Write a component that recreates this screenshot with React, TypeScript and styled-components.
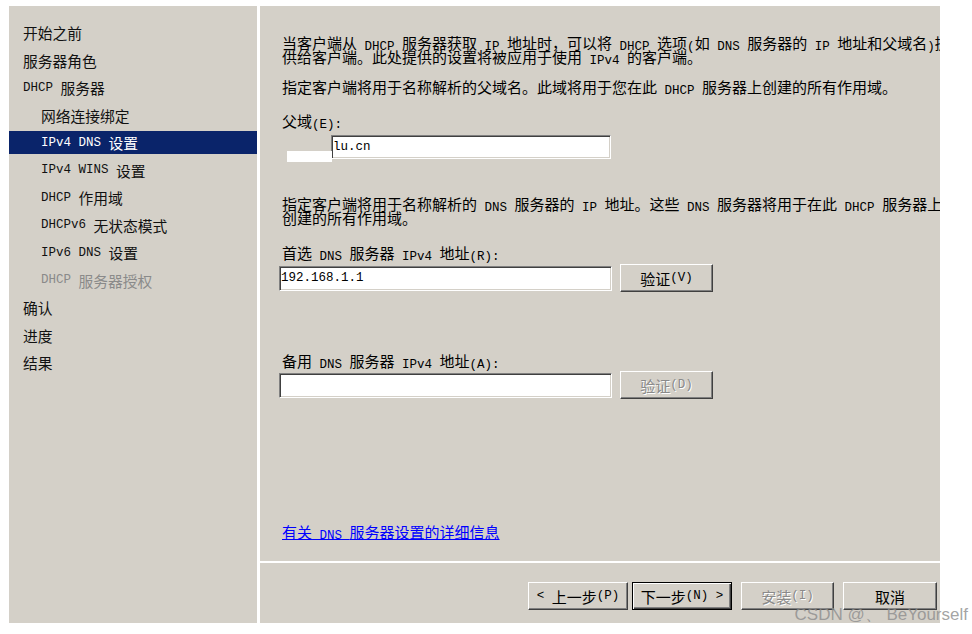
import React from "react"
import styled, { createGlobalStyle, css } from "styled-components"

const FACE = "#d4d0c8"

const GlobalStyle = createGlobalStyle`
  html, body {
    margin: 0;
    padding: 0;
    background: #fff;
  }
  body {
    font-family: "Noto Sans CJK SC", sans-serif;
    color: #000;
  }
`

type Step = { label: string; sub?: boolean; active?: boolean; disabled?: boolean }

const steps: Step[] = [
  { label: "开始之前" },
  { label: "服务器角色" },
  { label: "DHCP 服务器" },
  { label: "网络连接绑定", sub: true },
  { label: "IPv4 DNS 设置", sub: true, active: true },
  { label: "IPv4 WINS 设置", sub: true },
  { label: "DHCP 作用域", sub: true },
  { label: "DHCPv6 无状态模式", sub: true },
  { label: "IPv6 DNS 设置", sub: true },
  { label: "DHCP 服务器授权", sub: true, disabled: true },
  { label: "确认" },
  { label: "进度" },
  { label: "结果" },
]

// SimSun style: ASCII runs are half width, so they get a mono face at a smaller size
const Mixed: React.FC<{ text: string }> = ({ text }) => (
  <>
    {text
      .split(/([\x20-\x7e]+)/)
      .filter(Boolean)
      .map((part, i) =>
        /^[\x20-\x7e]+$/.test(part) ? (
          <Latin key={i}>{part}</Latin>
        ) : (
          <React.Fragment key={i}>{part}</React.Fragment>
        )
      )}
  </>
)

const App: React.FC = () => (
  <Page>
    <GlobalStyle />
    <Window>
      <Sidebar>
        {steps.map((s) => (
          <StepItem key={s.label} $sub={s.sub} $active={s.active} $disabled={s.disabled}>
            <Mixed text={s.label} />
          </StepItem>
        ))}
      </Sidebar>
      <Main>
        <Content>
          <Para>
            <Line>
              <Mixed text="当客户端从 DHCP 服务器获取 IP 地址时，可以将 DHCP 选项(如 DNS 服务器的 IP 地址和父域名)提" />
            </Line>
            <Line>
              <Mixed text="供给客户端。此处提供的设置将被应用于使用 IPv4 的客户端。" />
            </Line>
          </Para>
          <Para $mt={16}>
            <Line>
              <Mixed text="指定客户端将用于名称解析的父域名。此域将用于您在此 DHCP 服务器上创建的所有作用域。" />
            </Line>
          </Para>
          <Para $mt={20}>
            <Line>
              <Mixed text="父域(E):" />
            </Line>
          </Para>
          <DomainRow>
            <Field $w={280} $h={24} defaultValue="lu.cn" readOnly />
            <Redaction />
          </DomainRow>
          <Para $mt={38}>
            <Line>
              <Mixed text="指定客户端将用于名称解析的 DNS 服务器的 IP 地址。这些 DNS 服务器将用于在此 DHCP 服务器上" />
            </Line>
            <Line>
              <Mixed text="创建的所有作用域。" />
            </Line>
          </Para>
          <Para $mt={21}>
            <Line>
              <Mixed text="首选 DNS 服务器 IPv4 地址(R):" />
            </Line>
          </Para>
          <FieldRow $mt={4}>
            <Field $w={333} $h={25} defaultValue="192.168.1.1" readOnly />
            <WinButton $w={93}>
              <Mixed text="验证(V)" />
            </WinButton>
          </FieldRow>
          <Para $mt={62}>
            <Line>
              <Mixed text="备用 DNS 服务器 IPv4 地址(A):" />
            </Line>
          </Para>
          <FieldRow $mt={3}>
            <Field $w={333} $h={25} defaultValue="" readOnly />
            <WinButton $w={93} disabled>
              <Mixed text="验证(D)" />
            </WinButton>
          </FieldRow>
          <HelpLink href="#">
            <Mixed text="有关 DNS 服务器设置的详细信息" />
          </HelpLink>
        </Content>
        <Footer>
          <NavPair>
            <WinButton $w={100}>
              <Mixed text="< 上一步(P)" />
            </WinButton>
            <WinButton $w={100} $primary>
              <Mixed text="下一步(N) >" />
            </WinButton>
          </NavPair>
          <WinButton $w={93} disabled>
            <Mixed text="安装(I)" />
          </WinButton>
          <WinButton $w={94}>
            <Mixed text="取消" />
          </WinButton>
        </Footer>
      </Main>
    </Window>
    <Watermark>CSDN @、 BeYourself</Watermark>
  </Page>
)
export default App

const Latin = styled.span`
  font-family: "Liberation Mono", "DejaVu Sans Mono", monospace;
  font-size: 12.5px;
  white-space: pre;
  vertical-align: -1px;
`

const Page = styled.div`
  position: relative;
  width: 972px;
  height: 634px;
  overflow: hidden;
  padding: 6px 0 0 9px;
  box-sizing: border-box;
  font-size: 15px;
`

const Window = styled.div`
  display: flex;
  gap: 3px;
  width: 931px;
  height: 617px;
  background: #fff;
`

const Sidebar = styled.nav`
  width: 248px;
  flex-shrink: 0;
  background: ${FACE};
  padding-top: 15px;
  box-sizing: border-box;
  font-size: 14.75px;
`

const StepItem = styled.div<{ $sub?: boolean; $active?: boolean; $disabled?: boolean }>`
  display: flex;
  align-items: center;
  height: 23px;
  margin-bottom: 4.5px;
  padding-left: ${(p) => (p.$sub ? 32 : 14)}px;
  white-space: nowrap;
  color: ${(p) => (p.$active ? "#fff" : p.$disabled ? "#8a8a8a" : "#111")};
  background: ${(p) => (p.$active ? "#0a246a" : "transparent")};
`

const Main = styled.div`
  flex: 1;
  display: flex;
  flex-direction: column;
  gap: 2px;
  min-width: 0;
`

const Content = styled.section`
  height: 555px;
  background: ${FACE};
  padding: 30px 0 0 19px;
  box-sizing: border-box;
  overflow: hidden;
  display: flex;
  flex-direction: column;
  align-items: flex-start;
`

const Para = styled.div<{ $mt?: number }>`
  margin-top: ${(p) => p.$mt ?? 0}px;
  padding-left: 3px;
`

const Line = styled.div`
  height: 14px;
  line-height: 14px;
  white-space: nowrap;
`

const DomainRow = styled.div`
  position: relative;
  margin-top: 5px;
  padding-left: 52px;
`

const Redaction = styled.span`
  position: absolute;
  left: 8px;
  top: 18px;
  width: 45px;
  height: 11px;
  background: #fff;
`

const FieldRow = styled.div<{ $mt: number }>`
  display: flex;
  align-items: center;
  gap: 8px;
  margin-top: ${(p) => p.$mt}px;
  height: 28px;
`

const Field = styled.input<{ $w: number; $h: number }>`
  width: ${(p) => p.$w}px;
  height: ${(p) => p.$h}px;
  box-sizing: border-box;
  margin: 0;
  padding: 0 1px;
  background: #fff;
  border: 1px solid;
  border-color: #808080 #fff #fff #808080;
  box-shadow: inset 1px 1px #404040, inset -1px -1px ${FACE};
  font-family: "Liberation Mono", "DejaVu Sans Mono", monospace;
  font-size: 12.5px;
  color: #000;
  outline: none;
`

const WinButton = styled.button<{ $w: number; $primary?: boolean }>`
  width: ${(p) => p.$w}px;
  height: 28px;
  box-sizing: border-box;
  margin: 0;
  padding: 0;
  display: flex;
  align-items: center;
  justify-content: center;
  white-space: nowrap;
  background: ${FACE};
  font-family: "Noto Sans CJK SC", sans-serif;
  font-size: 15px;
  color: #000;
  border: 1px solid;
  border-color: #fff #404040 #404040 #fff;
  box-shadow: inset -1px -1px #808080;
  ${(p) =>
    p.$primary &&
    css`
      border-color: #000;
      box-shadow: inset 1px 1px #fff, inset -1px -1px #404040, inset -2px -2px #808080;
    `}
  &:disabled {
    color: #8a8a8a;
    text-shadow: 1px 1px #fff;
  }
`

const HelpLink = styled.a`
  margin-top: 126px;
  padding-left: 3px;
  line-height: 14px;
  color: #0000ff;
  text-decoration: underline;
  white-space: nowrap;
`

const Footer = styled.footer`
  height: 60px;
  background: ${FACE};
  display: flex;
  justify-content: flex-end;
  align-items: flex-start;
  gap: 9px;
  padding: 19px 3px 0 0;
  box-sizing: border-box;
`

const NavPair = styled.div`
  display: flex;
  gap: 4px;
`

const Watermark = styled.div`
  position: absolute;
  right: 4px;
  top: 605px;
  line-height: 20px;
  font-family: "Liberation Sans", Arial, sans-serif;
  font-size: 17px;
  color: rgba(140, 140, 140, 0.8);
  white-space: nowrap;
  pointer-events: none;
`
